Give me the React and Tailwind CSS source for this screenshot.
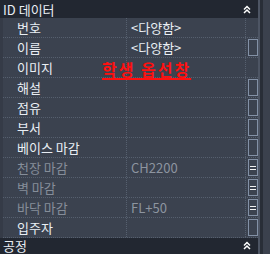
const ROWS = [
  { label: '번호', value: '<다양함>', box: null },
  { label: '이름', value: '<다양함>', box: 'empty' },
  { label: '이미지', value: '', box: null },
  { label: '해설', value: '', box: 'empty' },
  { label: '점유', value: '', box: 'empty' },
  { label: '부서', value: '', box: 'empty' },
  { label: '베이스 마감', value: '', box: 'empty' },
  { label: '천장 마감', value: 'CH2200', box: 'eq', dim: true },
  { label: '벽 마감', value: '', box: 'eq', dim: true },
  { label: '바닥 마감', value: 'FL+50', box: 'eq', dim: true },
  { label: '입주자', value: '', box: 'empty' },
]

function Chevrons() {
  return (
    <svg width="8" height="9" viewBox="0 0 8 9" className="shrink-0">
      <path d="M1 4.5 L4 1.5 L7 4.5 M1 8 L4 5 L7 8" fill="none" stroke="#ffffff" strokeWidth="1.5" />
    </svg>
  )
}

function Box({ type }) {
  if (!type) return null
  return (
    <div className="w-[10px] h-[17px] border border-[#8391a6] flex flex-col items-center justify-center gap-[2px]">
      {type === 'eq' && (
        <>
          <div className="w-[6px] h-[1px] bg-[#f2f2f2]" />
          <div className="w-[6px] h-[1px] bg-[#f2f2f2]" />
        </>
      )}
    </div>
  )
}

function Row({ row }) {
  return (
    <div className="flex h-[20px] border-b border-dotted border-[#56606f]">
      <div className={`w-[124px] shrink-0 pl-[14px] flex items-center border-r border-dotted border-[#56606f] ${row.dim ? 'text-[#868e9a]' : 'text-[#e9eef4]'}`}>
        {row.label}
      </div>
      <div className={`flex-1 pl-[4px] flex items-center ${row.dim ? 'text-[#8d95a0]' : 'text-[#e9eef4]'}`}>
        {row.value}
      </div>
      <div className="w-[13px] shrink-0 border-l border-dotted border-[#56606f] flex items-center justify-center pl-[1px]">
        <Box type={row.box} />
      </div>
    </div>
  )
}

export default function App() {
  return (
    <div
      className="w-[270px] h-[254px] overflow-hidden flex bg-[#3b424f] text-[13px] leading-none"
      style={{ fontFamily: '"Noto Sans CJK KR", "Noto Sans", sans-serif' }}
    >
      <div className="relative w-[258px] flex flex-col">
        {/* header */}
        <div className="h-[18px] shrink-0 bg-[#222731] flex items-center justify-between pl-[3px] pr-[7px] text-[#e9eef4]">
          <span>ID 데이터</span>
          <Chevrons />
        </div>

        <div className="border-l-[3px] border-[#353b47]">
          {ROWS.map((r) => (
            <Row key={r.label} row={r} />
          ))}
        </div>

        <div className="flex-1 bg-[#222731] flex items-center justify-between pl-[3px] pr-[7px] pb-[2px] text-[#e9eef4]">
          <span>공정</span>
          <Chevrons />
        </div>

        {/* note drawn over the grid */}
        <div className="absolute left-[102px] top-[61px] text-[16px] font-bold text-[#ff1010] underline decoration-[1.5px] underline-offset-[2px] tracking-[2px]">
          학생 옵선창
        </div>
      </div>

      {/* scrollbar */}
      <div className="flex-1 flex">
        <div className="w-[2px] bg-[#4d5564]" />
        <div className="w-[3px] bg-[#292e37]" />
        <div className="flex-1 bg-[#3b414d]" />
      </div>
    </div>
  )
}
